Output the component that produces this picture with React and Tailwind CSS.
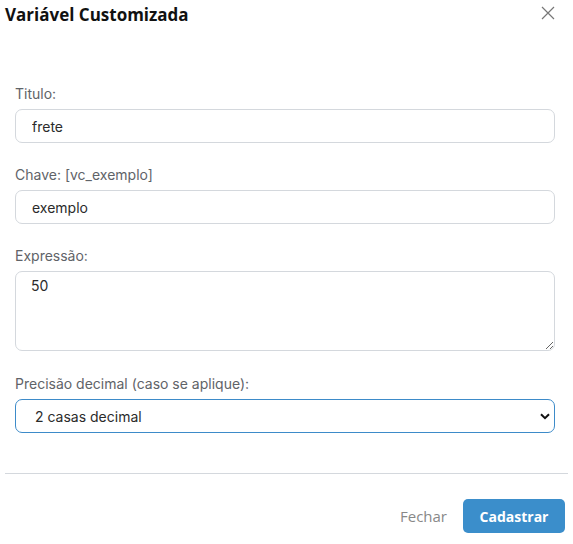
import React from "react";

const labelCls = "block text-[14px] leading-[20px] text-[#5f6368] mb-[5px]";
const inputCls =
  "block w-full h-[34px] rounded-[7px] border border-[#d4d8dd] bg-white px-[16px] text-[14px] text-[#2b2b2b] outline-none";

export default function App() {
  return (
    <div className="w-[573px] h-[544px] bg-white overflow-hidden" style={{ fontFamily: "Inter, 'Noto Sans', sans-serif" }}>
      <div className="flex items-start justify-between pl-[5px] pr-[18px] pt-[3px] h-[84px]">
        <h1 className="text-[17px] leading-[23px] font-bold text-[#111]" style={{ fontFamily: "'Open Sans', sans-serif" }}>
          Variável Customizada
        </h1>
        <svg width="14" height="14" viewBox="0 0 14 14" className="mt-[3px]">
          <path d="M1 1L13 13M13 1L1 13" stroke="#777" strokeWidth="1.2" />
        </svg>
      </div>
      <div className="px-[15px] pr-[18px]">
        <label className={labelCls}>Titulo:</label>
        <input className={inputCls} defaultValue="frete" readOnly />
        <label className={labelCls + " mt-[22px]"}>Chave: [vc_exemplo]</label>
        <input className={inputCls} defaultValue="exemplo" readOnly />
        <label className={labelCls + " mt-[22px]"}>Expressão:</label>
        <textarea
          className="block w-full h-[80px] rounded-[7px] border border-[#d4d8dd] bg-white px-[15px] py-[3px] text-[14px] text-[#2b2b2b] outline-none resize-y"
          defaultValue="50"
          readOnly
        />
        <label className={labelCls + " mt-[23px]"}>Precisão decimal (caso se aplique):</label>
        <div className="relative h-[34px] rounded-[7px] border border-[#3d8bc9] bg-white flex items-center px-[19px]">
          <span className="text-[14px] text-[#2b2b2b]">2 casas decimal</span>
          <svg width="10" height="7" viewBox="0 0 10 7" className="absolute right-[4px] top-[13px]">
            <path d="M1 1.2L5 5.2L9 1.2" stroke="#111" strokeWidth="2" fill="none" />
          </svg>
        </div>
      </div>
      <div className="mx-[5px] mt-[40px] h-px bg-[#d4d8dd]" />
      <div className="flex justify-end items-center gap-[16px] pr-[8px] mt-[25px]" style={{ fontFamily: "'Open Sans', sans-serif" }}>
        <span className="text-[15px] text-[#888]">Fechar</span>
        <button className="h-[34px] w-[102px] rounded-[5px] bg-[#3b8ecb] text-white text-[14px] font-bold">Cadastrar</button>
      </div>
    </div>
  );
}
